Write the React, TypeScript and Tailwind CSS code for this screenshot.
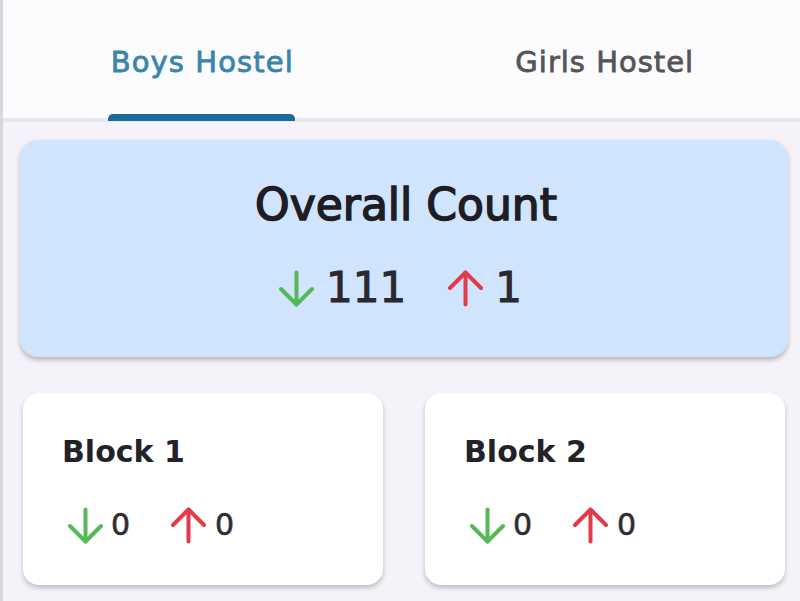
import React from "react";

const FONT = { fontFamily: '"DejaVu Sans", "Liberation Sans", sans-serif' };

function Arrow({ dir, color }: { dir: "down" | "up"; color: string }) {
  return (
    <svg width="37" height="37" viewBox="0 0 37 37" fill="none" className="shrink-0">
      {dir === "down" ? (
        <g stroke={color} strokeWidth="4" strokeLinecap="round" strokeLinejoin="round">
          <path d="M18.5 2.5V34.5" />
          <path d="M3 19L18.5 34.5L34 19" />
        </g>
      ) : (
        <g stroke={color} strokeWidth="4" strokeLinecap="round" strokeLinejoin="round">
          <path d="M18.5 34.5V2.5" />
          <path d="M3 18L18.5 2.5L34 18" />
        </g>
      )}
    </svg>
  );
}

const GREEN = "#55b955";
const RED = "#e23a48";

function BlockCard({ name }: { name: string }) {
  return (
    <div className="w-[360px] h-[192px] bg-white rounded-[16px] shadow-[0_3px_5px_rgba(0,0,0,0.22)] pl-[39px] pt-[44px] flex flex-col">
      <div className="text-[30px] leading-none font-bold text-[#232228]">{name}</div>
      <div className="mt-[40px] h-[36px] flex items-center">
        <div className="ml-[5px] flex items-center">
          <Arrow dir="down" color={GREEN} />
          <span className="ml-[7px] text-[30px] leading-none text-[#2e2d33] [-webkit-text-stroke:0.6px_#2e2d33]">0</span>
        </div>
        <div className="ml-[40px] flex items-center">
          <Arrow dir="up" color={RED} />
          <span className="ml-[8px] text-[30px] leading-none text-[#2e2d33] [-webkit-text-stroke:0.6px_#2e2d33]">0</span>
        </div>
      </div>
    </div>
  );
}

export default function App() {
  return (
    <div className="w-[800px] h-[601px] flex overflow-hidden bg-[#f5f3f9]" style={FONT}>
      <div className="w-[3px] h-full bg-[#d8d7db] shrink-0" />
      <div className="flex-1 flex flex-col">
        <div className="h-[122px] bg-[#fcfbfe] border-b-[4px] border-[#e9e7ee] flex">
          <div className="flex-1 flex justify-center pt-[48px]">
            <span className="relative text-[29px] leading-none tracking-[1.1px] text-[#3b84ab] [-webkit-text-stroke:0.8px_#3b84ab]">
              Boys Hostel
              <span className="absolute top-[66px] -left-[3px] -right-[1px] h-[7px] rounded-t-[5px] bg-[#1c6a9c]" />
            </span>
          </div>
          <div className="flex-1 flex justify-center pt-[48px]">
            <span className="text-[29px] leading-none tracking-[1px] text-[#55545a] [-webkit-text-stroke:0.8px_#55545a] translate-x-[4px]">
              Girls Hostel
            </span>
          </div>
        </div>
        <div className="flex-1 flex flex-col pt-[18px]">
          <div className="ml-[17px] mr-[12px] h-[217px] bg-[#d0e4fd] rounded-[18px] shadow-[0_3px_5px_rgba(0,0,0,0.25)] flex flex-col items-center pt-[43px]">
            <div className="text-[44px] leading-none text-[#1e1d23] [-webkit-text-stroke:1.5px_#1e1d23] translate-x-[2px]">
              Overall Count
            </div>
            <div className="mt-[40px] h-[42px] flex items-center -translate-x-[4px]">
              <Arrow dir="down" color={GREEN} />
              <span className="ml-[11px] text-[42px] leading-none text-[#2a292f] [-webkit-text-stroke:1px_#2a292f]">111</span>
              <span className="ml-[41px]">
                <Arrow dir="up" color={RED} />
              </span>
              <span className="ml-[11px] text-[42px] leading-none text-[#2a292f] [-webkit-text-stroke:1px_#2a292f]">1</span>
            </div>
          </div>
          <div className="mt-[36px] ml-[20px] flex gap-[42px]">
            <BlockCard name="Block 1" />
            <BlockCard name="Block 2" />
          </div>
        </div>
      </div>
    </div>
  );
}
